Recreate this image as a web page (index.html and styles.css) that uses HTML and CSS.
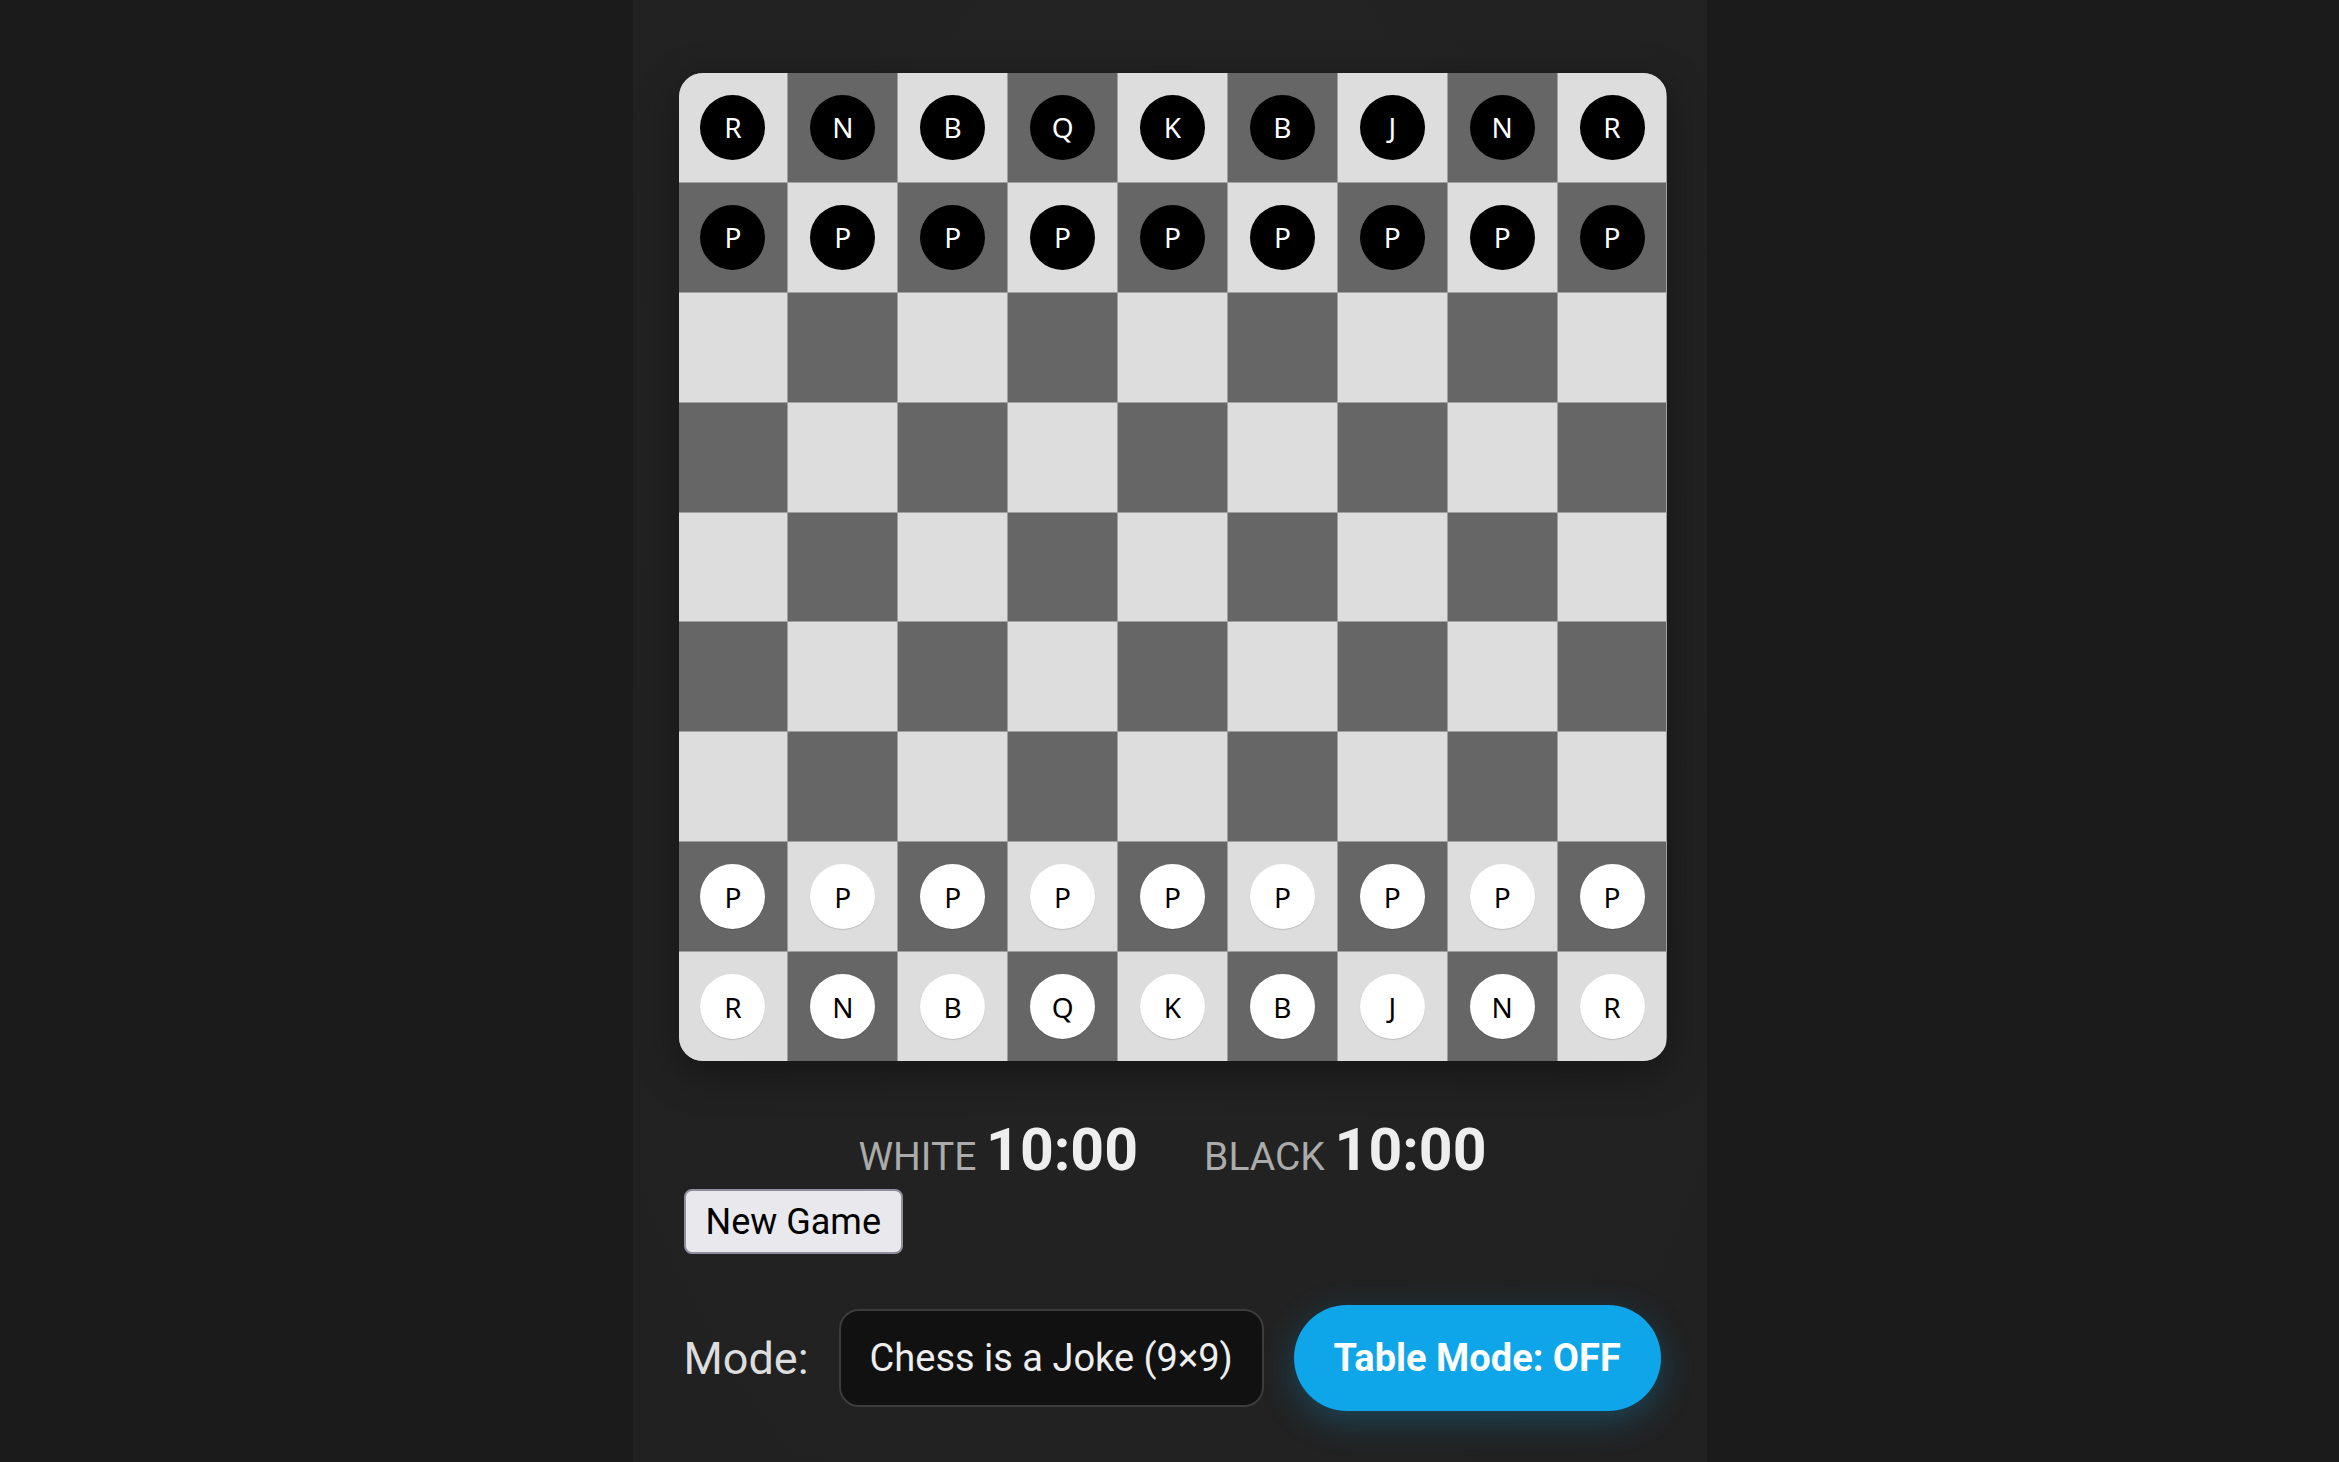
FILE: index.html
```html
<!DOCTYPE html>
<html lang="en">
<head>
<meta charset="utf-8">
<title>Chess is a Joke</title>
<link rel="stylesheet" href="styles.css">
</head>
<body>
<main class="panel">
  <div class="board">
    <div class="cell light"><span class="piece black">R</span></div>
    <div class="cell dark"><span class="piece black">N</span></div>
    <div class="cell light"><span class="piece black">B</span></div>
    <div class="cell dark"><span class="piece black">Q</span></div>
    <div class="cell light"><span class="piece black">K</span></div>
    <div class="cell dark"><span class="piece black">B</span></div>
    <div class="cell light"><span class="piece black">J</span></div>
    <div class="cell dark"><span class="piece black">N</span></div>
    <div class="cell light"><span class="piece black">R</span></div>

    <div class="cell dark"><span class="piece black">P</span></div>
    <div class="cell light"><span class="piece black">P</span></div>
    <div class="cell dark"><span class="piece black">P</span></div>
    <div class="cell light"><span class="piece black">P</span></div>
    <div class="cell dark"><span class="piece black">P</span></div>
    <div class="cell light"><span class="piece black">P</span></div>
    <div class="cell dark"><span class="piece black">P</span></div>
    <div class="cell light"><span class="piece black">P</span></div>
    <div class="cell dark"><span class="piece black">P</span></div>

    <div class="cell light"></div><div class="cell dark"></div><div class="cell light"></div><div class="cell dark"></div><div class="cell light"></div><div class="cell dark"></div><div class="cell light"></div><div class="cell dark"></div><div class="cell light"></div>
    <div class="cell dark"></div><div class="cell light"></div><div class="cell dark"></div><div class="cell light"></div><div class="cell dark"></div><div class="cell light"></div><div class="cell dark"></div><div class="cell light"></div><div class="cell dark"></div>
    <div class="cell light"></div><div class="cell dark"></div><div class="cell light"></div><div class="cell dark"></div><div class="cell light"></div><div class="cell dark"></div><div class="cell light"></div><div class="cell dark"></div><div class="cell light"></div>
    <div class="cell dark"></div><div class="cell light"></div><div class="cell dark"></div><div class="cell light"></div><div class="cell dark"></div><div class="cell light"></div><div class="cell dark"></div><div class="cell light"></div><div class="cell dark"></div>
    <div class="cell light"></div><div class="cell dark"></div><div class="cell light"></div><div class="cell dark"></div><div class="cell light"></div><div class="cell dark"></div><div class="cell light"></div><div class="cell dark"></div><div class="cell light"></div>

    <div class="cell dark"><span class="piece white">P</span></div>
    <div class="cell light"><span class="piece white">P</span></div>
    <div class="cell dark"><span class="piece white">P</span></div>
    <div class="cell light"><span class="piece white">P</span></div>
    <div class="cell dark"><span class="piece white">P</span></div>
    <div class="cell light"><span class="piece white">P</span></div>
    <div class="cell dark"><span class="piece white">P</span></div>
    <div class="cell light"><span class="piece white">P</span></div>
    <div class="cell dark"><span class="piece white">P</span></div>

    <div class="cell light"><span class="piece white">R</span></div>
    <div class="cell dark"><span class="piece white">N</span></div>
    <div class="cell light"><span class="piece white">B</span></div>
    <div class="cell dark"><span class="piece white">Q</span></div>
    <div class="cell light"><span class="piece white">K</span></div>
    <div class="cell dark"><span class="piece white">B</span></div>
    <div class="cell light"><span class="piece white">J</span></div>
    <div class="cell dark"><span class="piece white">N</span></div>
    <div class="cell light"><span class="piece white">R</span></div>
  </div>

  <div class="timers">
    <div class="timer"><span class="timer-label">WHITE</span> <span class="timer-time">10:00</span></div>
    <div class="timer"><span class="timer-label">BLACK</span> <span class="timer-time">10:00</span></div>
  </div>

  <div class="controls">
    <button class="btn-new" type="button">New Game</button>
  </div>

  <div class="mode-row">
    <label class="mode-label" for="mode">Mode:</label>
    <select class="mode-select" id="mode">
      <option>Chess is a Joke (9×9)</option>
    </select>
    <button class="btn-toggle" type="button">Table Mode: OFF</button>
  </div>
</main>
</body>
</html>
```

FILE: styles.css
```css
html, body {
  margin: 0;
  padding: 0;
}

body {
  background: #1b1b1b;
  font-family: Roboto, "Liberation Sans", sans-serif;
  color: #eeeeee;
}

.panel {
  box-sizing: border-box;
  width: 1074px;
  min-height: 100vh;
  margin: 0 auto;
  padding: 73px 40px 40px 46px;
  background: radial-gradient(ellipse at 50% 30%, #242424 0%, #222222 55%, #212121 100%);
}

.board {
  width: 988px;
  height: 988px;
  display: grid;
  grid-template-columns: repeat(9, 1fr);
  grid-template-rows: repeat(9, 1fr);
  gap: 1px;
  background: #a0a0a0;
  border-radius: 24px;
  overflow: hidden;
  box-shadow: 0 12px 40px rgba(0, 0, 0, 0.38);
}

.cell {
  display: flex;
  align-items: center;
  justify-content: center;
}

.cell.light { background: #dddddd; }
.cell.dark { background: #666666; }

.piece {
  width: 65px;
  height: 65px;
  border-radius: 50%;
  display: flex;
  align-items: center;
  justify-content: center;
  font-family: "Noto Sans", "DejaVu Sans", sans-serif;
  font-size: 28px;
  line-height: 1;
}

.piece.black {
  background: #000000;
  color: #ffffff;
}

.piece.white {
  background: #ffffff;
  color: #000000;
  box-shadow: 0 1px 1px rgba(0, 0, 0, 0.15);
}

.timers {
  width: 988px;
  margin-top: 54px;
  display: flex;
  justify-content: center;
  align-items: baseline;
  gap: 66px;
}

.timer {
  font-size: 39px;
  white-space: pre;
}

.timer-label {
  color: #ababab;
}

.timer-time {
  font-size: 59px;
  font-weight: 700;
  color: #eeeeee;
}

.controls {
  padding-left: 5px;
  margin-top: 5px;
}

.btn-new {
  box-sizing: border-box;
  height: 65px;
  padding: 0 20px;
  border: 2px solid #8f8f9d;
  border-radius: 8px;
  background: #e9e9ed;
  color: #000000;
  font-family: Roboto, "Liberation Sans", sans-serif;
  font-size: 36px;
}

.mode-row {
  margin-top: 51px;
  padding-left: 5px;
  display: flex;
  align-items: center;
  gap: 30px;
}

.mode-label {
  font-size: 45px;
  color: #dddddd;
}

.mode-select {
  -webkit-appearance: none;
  appearance: none;
  box-sizing: border-box;
  height: 98px;
  padding: 0 28px 0 29px;
  border: 2px solid #3c3c3c;
  border-radius: 20px;
  background: #111111;
  color: #eeeeee;
  font-family: Roboto, "Liberation Sans", sans-serif;
  font-size: 38px;
}

.btn-toggle {
  box-sizing: border-box;
  height: 106px;
  padding: 0 40px;
  border: none;
  border-radius: 53px;
  background: #0ea5e9;
  color: #ffffff;
  font-family: Roboto, "Liberation Sans", sans-serif;
  font-size: 38px;
  font-weight: 700;
  box-shadow: 0 10px 34px rgba(14, 165, 233, 0.28);
}
```
